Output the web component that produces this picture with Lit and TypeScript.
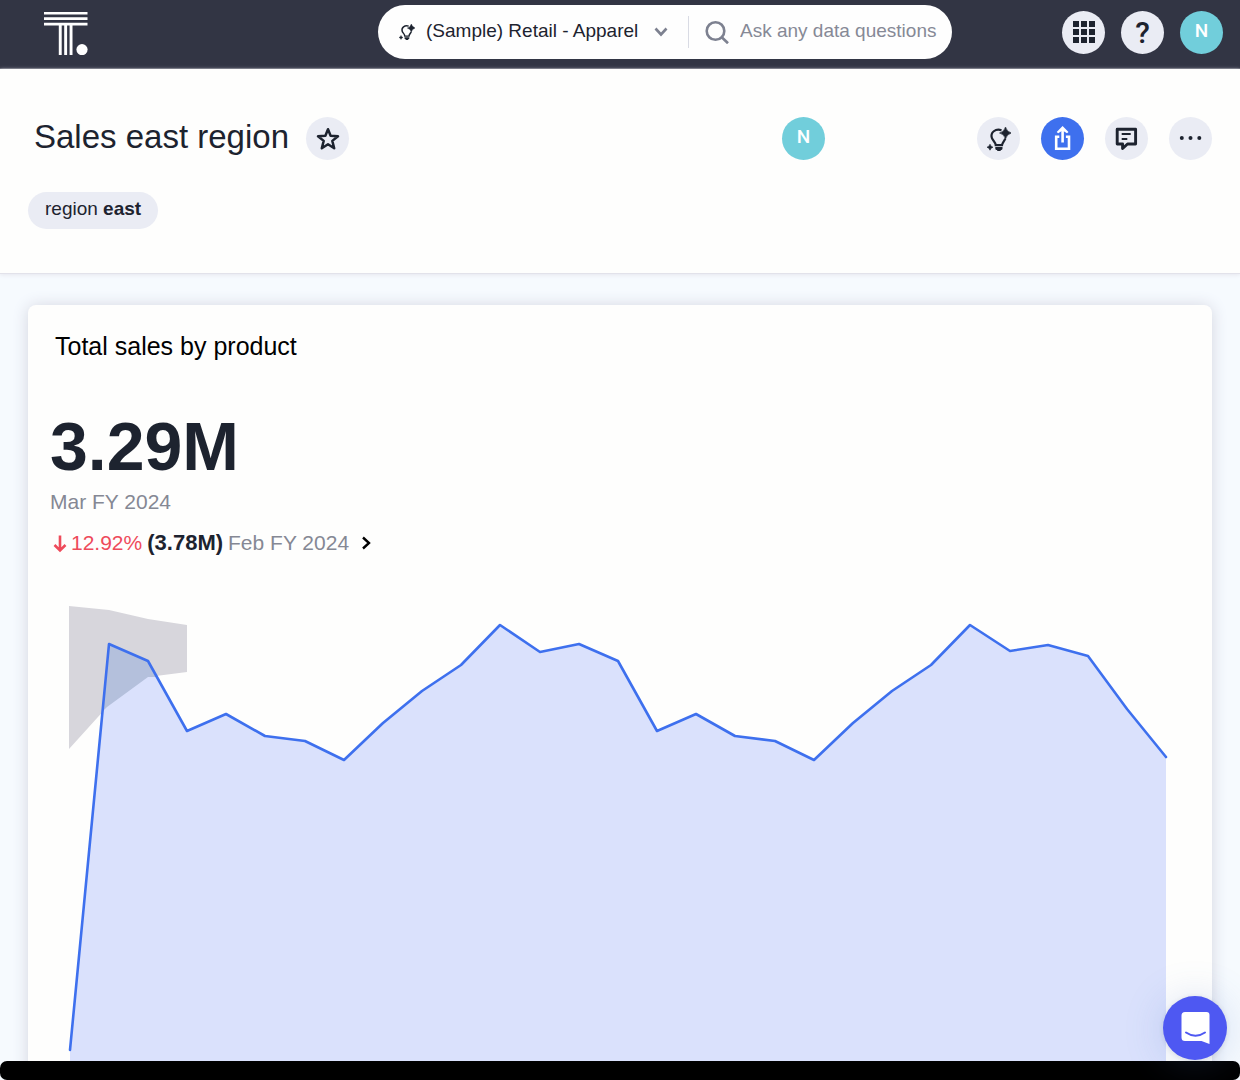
import { LitElement, html, css, svg } from "lit";
import { customElement, property, state } from "lit/decorators.js";

type Point = [number, number];

const SALES: Point[] = [
  [70, 1050], [109, 644], [148, 661], [187, 731], [226, 714], [265, 736], [305, 741],
  [344, 760], [383, 723], [422, 691], [461, 665], [500, 625], [540, 652], [579, 644],
  [618, 661], [657, 731], [696, 714], [735, 736], [775, 741], [814, 760], [853, 723],
  [892, 691], [931, 665], [970, 625], [1010, 651], [1048, 645], [1088, 656],
  [1127, 709], [1166, 757],
];

const BAND: Point[] = [
  [69, 606], [109, 610], [148, 619], [187, 625], [187, 672], [148, 677], [107, 707], [69, 749],
];

const BAND_OVERLAP: Point[] = [
  [109, 644], [148, 661], [157, 677], [148, 677], [107, 707], [103, 711],
];

const toPoints = (points: Point[]) => points.map((p) => p.join(",")).join(" ");

// Light bulb with sparkles, drawn in a 24-unit box.
const bulb = svg`
  <path d="M14.5 3.2C8.500 1.200 3.200 5.500 4.800 10.800C5.500 13.500 8.400 14.600 8.700 18.200H15C15.200 15.500 17.500 14 18.300 11.600" fill="none" stroke="currentColor" stroke-width="2.2"/>
  <path d="M8.300 20H15.500V21.500C15.500 22.500 14.500 23 13.700 23V24H10.200V23C9.200 23 8.300 22.500 8.300 21.500Z" fill="currentColor"/>
  <path d="M18.500 0Q19.700 4.800 24.500 6Q19.700 7.200 18.500 12Q17.300 7.200 12.500 6Q17.300 4.800 18.500 0Z" fill="currentColor" stroke="currentColor" stroke-width="0.6"/>
  <path d="M3 17.200Q3.600 19.600 6 20.200Q3.600 20.800 3 23.200Q2.400 20.800 0 20.200Q2.400 19.600 3 17.200Z" fill="currentColor" stroke="currentColor" stroke-width="0.6"/>
`;

@customElement("user-avatar")
export class UserAvatar extends LitElement {
  static styles = css`
    :host { display: block; flex: none; }
    .avatar {
      display: block;
      width: 43px;
      height: 43px;
      padding: 0 0 4px;
      border: 0;
      border-radius: 50%;
      background: #71cedb;
      color: #fff;
      font: 500 19px/39px Roboto, "Liberation Sans", sans-serif;
      text-align: center;
      cursor: pointer;
    }
  `;

  @property() initial = "";

  render() {
    return html`<button class="avatar" aria-label="Profile ${this.initial}">${this.initial}</button>`;
  }
}

@customElement("sales-chart")
export class SalesChart extends LitElement {
  static styles = css`
    :host { display: block; }
    .chart { display: block; width: 100%; height: auto; }
    .area { fill: #dae1fc; }
    .band { fill: #d7d6dc; }
    .overlap { fill: #b4c0dc; }
    .line { fill: none; stroke: #3e70ee; stroke-width: 2.6; stroke-linejoin: round; stroke-linecap: round; }
  `;

  render() {
    return html`
      <svg class="chart" viewBox="28 580 1184 520" role="img" aria-label="Total sales by month">
        <polygon class="band" points=${toPoints(BAND)}></polygon>
        <polygon class="area" points=${toPoints([...SALES, [1166, 1100], [70, 1100]])}></polygon>
        <polygon class="overlap" points=${toPoints(BAND_OVERLAP)}></polygon>
        <polyline class="line" points=${toPoints(SALES)}></polyline>
      </svg>
    `;
  }
}

@customElement("app-root")
export class AppRoot extends LitElement {
  static styles = css`
    :host {
      display: block;
      font-family: "Liberation Sans", Arial, sans-serif;
      color: #1d232f;
    }
    * { box-sizing: border-box; }
    svg { display: block; }
    h1, h2, p { margin: 0; font-weight: 400; }
    button { font: inherit; cursor: pointer; }

    .page {
      display: flex;
      flex-direction: column;
      height: 100vh;
      overflow: hidden;
      background: #f6fafe;
    }

    .topbar {
      flex: none;
      display: grid;
      grid-template-columns: minmax(0, 21fr) auto minmax(0, 16fr);
      align-items: center;
      height: 69px;
      padding-bottom: 4px;
      background: #323544;
      border-bottom: 1px solid #5a5c69;
    }
    .logo { justify-self: start; margin-left: 43px; color: #fff; }
    .finder {
      display: flex;
      align-items: center;
      height: 54px;
      padding: 0 12px 0 21px;
      border-radius: 27px;
      background: #fefefe;
      font-size: 19px;
    }
    .source { display: grid; align-items: center; margin-left: 11px; }
    .source-select, .source-chevron { grid-area: 1 / 1; }
    .source-select {
      appearance: none;
      margin: 0;
      padding: 0 28px 3px 0;
      border: 0;
      background: none;
      color: inherit;
      font: inherit;
      line-height: 24px;
    }
    .source-chevron { justify-self: end; pointer-events: none; color: #7d8190; }
    .divider { width: 1px; height: 32px; margin: 0 16px 0 20px; background: #d9dbe4; }
    .search-icon { flex: none; color: #7d8190; }
    .search {
      width: 200px;
      margin: 0 0 0 11px;
      padding: 0 0 2px;
      border: 0;
      background: none;
      color: inherit;
      font: inherit;
      line-height: 24px;
    }
    .search::placeholder { color: #868996; opacity: 1; }
    .tools { display: flex; justify-content: flex-end; gap: 16px; padding-right: 17px; }

    .round {
      display: grid;
      place-items: center;
      flex: none;
      width: 43px;
      height: 43px;
      padding: 0;
      border: 0;
      border-radius: 50%;
      background: #eaecf4;
      color: #1d232f;
    }
    .round.primary { background: #3e70ee; color: #fff; }
    .help { font: 500 30px/43px Roboto, "Liberation Sans", sans-serif; }

    .heading {
      flex: none;
      height: 205px;
      padding: 48px 28px 0;
      background: #fefefd;
      border-bottom: 1px solid #e2e2ea;
      box-shadow: 0 1px 4px #e6e6ee;
    }
    .title-row { display: flex; align-items: center; }
    .title {
      margin: 0 17px 0 6px;
      padding-bottom: 4px;
      font-size: 33px;
      line-height: 38px;
      white-space: nowrap;
    }
    .viewers { margin-left: auto; margin-right: 152px; }
    .actions { display: flex; gap: 21px; }
    .chip {
      display: inline-block;
      margin-top: 32px;
      padding: 6px 17px 9px;
      border: 0;
      border-radius: 19px;
      background: #eaecf4;
      color: inherit;
      font-size: 19px;
      line-height: 22px;
    }

    .board { flex: 1; min-height: 0; padding: 31px 28px 0; overflow: hidden; }
    .card {
      padding-top: 26px;
      border-radius: 8px;
      background: #fefefd;
      box-shadow: 0 1px 16px #d3d5e0;
    }
    .card-title { padding: 0 27px; color: #000; font-size: 25px; line-height: 30px; }
    .kpi { padding: 49px 22px 24px; }
    .kpi-value { font-size: 68px; font-weight: 700; line-height: 72px; }
    .kpi-period { margin-top: 7px; color: #858894; font-size: 21px; line-height: 26px; }
    .kpi-change {
      display: flex;
      align-items: center;
      gap: 5px;
      margin-top: 15px;
      padding: 0;
      border: 0;
      background: none;
      color: #858894;
      font-size: 21px;
      line-height: 26px;
    }
    .down { display: flex; align-items: center; gap: 3px; color: #ee4b5b; }
    .previous { color: #1d232f; font-size: 22px; }
    .next { margin-left: 6px; color: #000; }

    .foot { flex: none; height: 19px; border-radius: 7px; background: #000; }

    .chat {
      position: fixed;
      right: 13px;
      bottom: 20px;
      width: 64px;
      height: 64px;
      padding: 0;
      border: 0;
      border-radius: 50%;
      background: #4e58f2;
      box-shadow: 0 2px 40px rgba(78, 120, 200, 0.22), 0 1px 6px rgba(0, 0, 0, 0.1);
    }
  `;

  @state() private favourite = false;

  render() {
    return html`
      <div class="page">
        <header class="topbar">
          <svg class="logo" width="46" height="46" viewBox="0 0 46 46" fill="currentColor" role="img" aria-label="Home">
            <path d="M1 3H44.500V5.600H1ZM1 8.300H44.500V10.900H1ZM1 13.700H44.500V16.600H1ZM15.800 16H18.700V46H15.800ZM21.200 16H24.100V46H21.200ZM26.600 16H29.500V46H26.600Z"/>
            <circle cx="39" cy="40.600" r="5.600"/>
          </svg>
          <div class="finder">
            <svg width="16" height="16" viewBox="0 0 24 24" aria-hidden="true">${bulb}</svg>
            <label class="source">
              <select class="source-select" aria-label="Data source">
                <option>(Sample) Retail - Apparel</option>
              </select>
              <svg class="source-chevron" width="14" height="10" viewBox="0 0 14 10" fill="none" stroke="currentColor" stroke-width="2.600" aria-hidden="true">
                <path d="M1.500 1.500L7 7.500L12.500 1.500"/>
              </svg>
            </label>
            <span class="divider"></span>
            <svg class="search-icon" width="24" height="24" viewBox="0 0 24 24" fill="none" stroke="currentColor" stroke-width="2.600" aria-hidden="true">
              <circle cx="10.500" cy="11" r="8.800"/><path d="M17 17.500L23 23.300"/>
            </svg>
            <input class="search" type="text" placeholder="Ask any data questions" aria-label="Ask any data questions" />
          </div>
          <div class="tools">
            <button class="round" aria-label="Apps">
              <svg width="22" height="22" viewBox="0 0 22 22" fill="currentColor">
                ${[0, 8, 16].map((y) => [0, 8, 16].map((x) => svg`<rect x=${x} y=${y} width="6" height="6"/>`))}
              </svg>
            </button>
            <button class="round help" aria-label="Help">?</button>
            <user-avatar initial="N"></user-avatar>
          </div>
        </header>

        <section class="heading">
          <div class="title-row">
            <h1 class="title">Sales east region</h1>
            <button class="round" aria-label="Favourite" aria-pressed=${this.favourite}
              @click=${() => (this.favourite = !this.favourite)}>
              <svg width="24" height="24" viewBox="0 0 24 24" fill=${this.favourite ? "currentColor" : "none"} stroke="currentColor" stroke-width="2.500" stroke-linejoin="round">
                <path d="M12 2.200L14.600 8.800L22 9.300L16.300 13.900L18.200 21.200L12 17.200L5.800 21.200L7.700 13.900L2 9.300L9.400 8.800Z"/>
              </svg>
            </button>
            <user-avatar class="viewers" initial="N"></user-avatar>
            <div class="actions">
              <button class="round" aria-label="Insights">
                <svg width="24" height="24" viewBox="0 0 24 24">${bulb}</svg>
              </button>
              <button class="round primary" aria-label="Share">
                <svg width="43" height="43" viewBox="0 0 43 43" fill="none" stroke="currentColor" stroke-width="2.600">
                  <path d="M18.300 19.800H15.200V31.800H28V19.800H24.900"/>
                  <path d="M21.600 25.500V12"/>
                  <path d="M21.600 9L27.500 15L26 16.200L21.600 13.500L17.200 16.200L15.700 15Z" fill="currentColor" stroke="none"/>
                </svg>
              </button>
              <button class="round" aria-label="Comments">
                <svg width="43" height="43" viewBox="0 0 43 43" fill="none" stroke="currentColor">
                  <path d="M12.200 12.200H30.600V27H22.500L17.600 31.500V27H12.200Z" stroke-width="2.900" stroke-linejoin="round"/>
                  <path d="M16.700 17H25.700M16.700 22H22.300" stroke-width="2.200"/>
                </svg>
              </button>
              <button class="round" aria-label="More">
                <svg width="43" height="43" viewBox="0 0 43 43" fill="currentColor">
                  <circle cx="12.800" cy="20.900" r="2"/><circle cx="21.500" cy="20.900" r="2"/><circle cx="30.300" cy="20.900" r="2"/>
                </svg>
              </button>
            </div>
          </div>
          <button class="chip">region <b>east</b></button>
        </section>

        <main class="board">
          <article class="card">
            <h2 class="card-title">Total sales by product</h2>
            <div class="kpi">
              <p class="kpi-value">3.29M</p>
              <p class="kpi-period">Mar FY 2024</p>
              <button class="kpi-change">
                <span class="down">
                  <svg width="18" height="20" viewBox="0 0 18 20" fill="none" stroke="currentColor" stroke-width="2.600" aria-hidden="true">
                    <path d="M10 2.500V17M4.500 12L10 17.500L15.500 12"/>
                  </svg>
                  12.92%
                </span>
                <b class="previous">(3.78M)</b>
                <span>Feb FY 2024</span>
                <svg class="next" width="12" height="14" viewBox="0 0 12 14" fill="none" stroke="currentColor" stroke-width="2.400" aria-hidden="true">
                  <path d="M3 1.500L9 7L3 12.500"/>
                </svg>
              </button>
            </div>
            <sales-chart></sales-chart>
          </article>
        </main>

        <footer class="foot"></footer>

        <button class="chat" aria-label="Open chat">
          <svg width="64" height="64" viewBox="0 0 64 64">
            <path d="M22 16H43.500Q46.500 16 46.500 19V48L38.500 45H22Q18.500 45 18.500 41.500V19.500Q18.500 16 22 16Z" fill="#fff"/>
            <path d="M23 36.500Q32.500 43 42 36.500" fill="none" stroke="#4e58f2" stroke-width="2" stroke-linecap="round"/>
          </svg>
        </button>
      </div>
    `;
  }
}
